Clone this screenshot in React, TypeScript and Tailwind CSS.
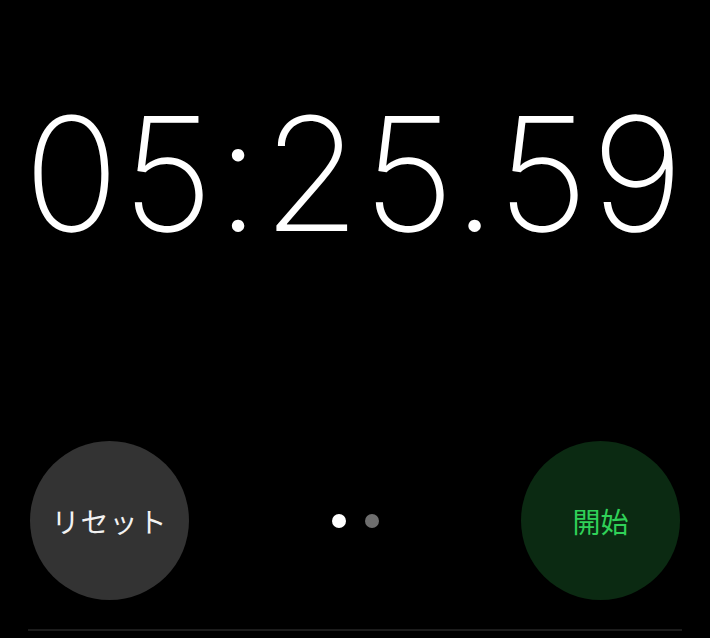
export default function App() {
  return (
    <div className="flex h-[638px] w-[710px] flex-col bg-black font-['Inter','Noto_Sans_CJK_JP',sans-serif]">
      <div className="flex h-[350px] items-center justify-center pb-[2px]">
        <span className="text-[158px] font-[170] leading-none tracking-[2.8px] text-white">
          05:25.59
        </span>
      </div>
      <div className="flex items-center justify-between px-[30px] pt-[91px]">
        <button className="flex h-[159px] w-[159px] items-center justify-center rounded-full bg-[#333333] font-['Noto_Sans_CJK_JP',sans-serif] text-[28px] tracking-[1px] text-[#f2f2f2]">
          リセット
        </button>
        <div className="flex items-center gap-[19px]">
          <span className="h-[14px] w-[14px] rounded-full bg-white" />
          <span className="h-[14px] w-[14px] rounded-full bg-[#6e6e6e]" />
        </div>
        <button className="flex h-[159px] w-[159px] items-center justify-center rounded-full bg-[#0b2a12] font-['Noto_Sans_CJK_JP',sans-serif] text-[28px] text-[#30d158]">
          開始
        </button>
      </div>
      <div className="mx-[28px] mt-[29px] h-[2px] bg-[#1c1c1c]" />
    </div>
  );
}
